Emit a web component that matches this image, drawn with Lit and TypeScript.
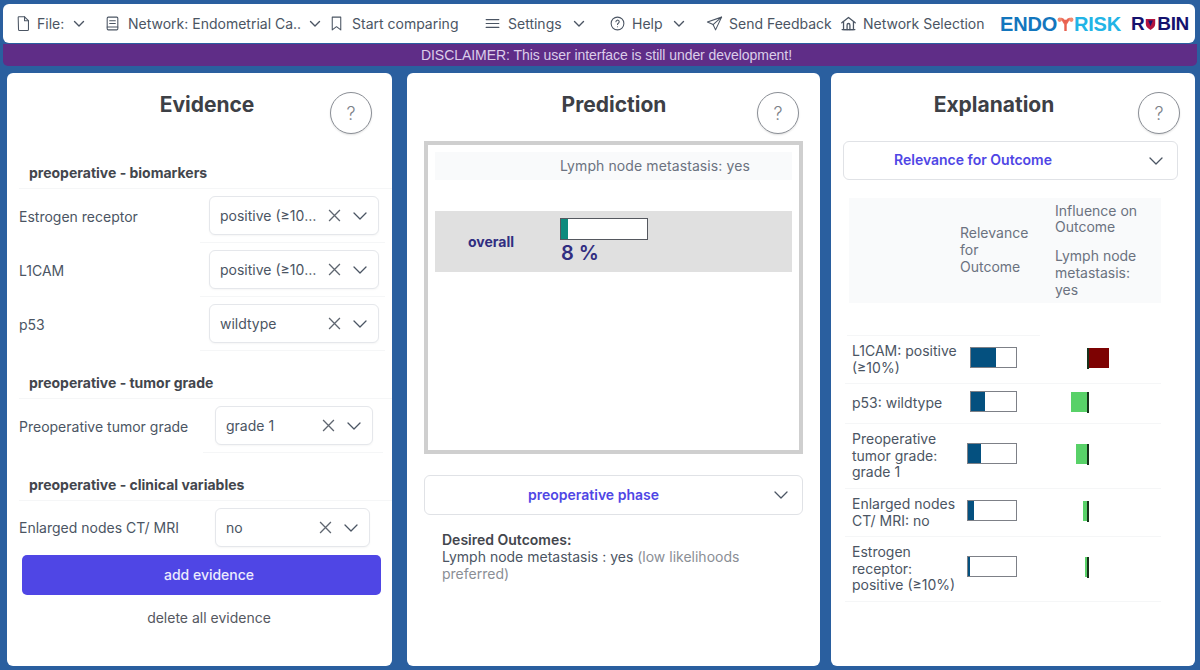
import { LitElement, css, html, svg } from 'lit';
import { customElement, property } from 'lit/decorators.js';

const chevron = html`<svg class="chev" viewBox="0 0 12 8" width="12" height="8"><path d="M1.500 1.500 6 6l4.500-4.500" fill="none" stroke="currentColor" stroke-width="1.400" stroke-linecap="round" stroke-linejoin="round"/></svg>`;

const bigChevron = html`<svg class="chev" viewBox="0 0 14 8" width="14" height="8"><path d="M1 1l6 6 6-6" fill="none" stroke="currentColor" stroke-width="1.300" stroke-linecap="round" stroke-linejoin="round"/></svg>`;

const icon = (body: unknown) =>
  html`<svg class="ico" viewBox="0 0 24 24" width="17" height="17" fill="none" stroke="currentColor" stroke-width="1.500" stroke-linecap="round" stroke-linejoin="round">${body}</svg>`;

const icons = {
  file: svg`<path d="M4.500 3.500a1 1 0 0 1 1-1h8l5.500 5.500v12.500a1.500 1.500 0 0 1-1.500 1.500h-11a1.500 1.500 0 0 1-1.500-1.500z"/><path d="M13.500 2.500v5.500h5.500"/>`,
  book: svg`<rect x="4.500" y="3" width="15" height="18" rx="1.500"/><path d="M8 8h8M8 12h8M4.500 17h15"/>`,
  bookmark: svg`<path d="M6 3h12v18l-6-4.500L6 21z"/>`,
  menu: svg`<path d="M3 6.500h18M3 12h18M3 17.500h18"/>`,
  help: svg`<circle cx="12" cy="12" r="9"/><path d="M9.800 9.500a2.300 2.300 0 1 1 3.400 2.100c-.8.500-1.200.9-1.200 1.900"/><path d="M12 16.500v.2"/>`,
  send: svg`<path d="M22 3 2 10l8 3.500L13.500 21z"/><path d="M22 3 10 13.500"/>`,
  home: svg`<path d="M2.500 11 12 3.500 21.500 11" stroke-width="1.800"/><path d="M5 9.500V20.500h14V9.500" stroke-width="1.800"/><path d="M3 20.500h18" stroke-width="1.800"/><path d="M10 20.500v-6.500a2 2 0 0 1 4 0v6.500" stroke-width="1.800"/>`,
};

@customElement('ev-select')
export class EvSelect extends LitElement {
  @property({ type: String }) value = '';

  static styles = css`
    :host {
      display: block;
    }
    .box {
      height: 39px;
      box-sizing: border-box;
      display: flex;
      align-items: center;
      border: 1px solid #e5e7eb;
      border-radius: 6px;
      background: #fff;
      padding: 0 11px 0 10px;
      color: #4b5563;
      font-size: 14px;
      box-shadow: 0 1px 2px rgba(0, 0, 0, 0.04);
    }
    .val {
      flex: 1;
      min-width: 0;
      white-space: nowrap;
      overflow: hidden;
      text-overflow: ellipsis;
    }
    .x {
      margin: 0 12px 0 8px;
      flex: none;
    }
    .chev {
      flex: none;
      color: #4b5563;
    }
  `;

  render() {
    return html`<div class="box">
      <span class="val">${this.value}</span>
      <svg class="x" viewBox="0 0 12 12" width="13" height="13"><path d="M1 1l10 10M11 1 1 11" stroke="#5f6670" stroke-width="1.200" fill="none"/></svg>
      ${bigChevron}
    </div>`;
  }
}

interface EvidenceRow {
  label: string;
  value: string;
  kind: 'a' | 'b' | 'c';
}

const sections: { title: string; rows: EvidenceRow[] }[] = [
  {
    title: 'preoperative - biomarkers',
    rows: [
      { label: 'Estrogen receptor', value: 'positive (≥10%)', kind: 'a' },
      { label: 'L1CAM', value: 'positive (≥10%)', kind: 'a' },
      { label: 'p53', value: 'wildtype', kind: 'a' },
    ],
  },
  {
    title: 'preoperative - tumor grade',
    rows: [{ label: 'Preoperative tumor grade', value: 'grade 1', kind: 'b' }],
  },
  {
    title: 'preoperative - clinical variables',
    rows: [{ label: 'Enlarged nodes CT/ MRI', value: 'no', kind: 'c' }],
  },
];

const explanation = [
  { label: 'L1CAM: positive (≥10%)', relW: 47, rel: 25, inf: 20, h: 48 },
  { label: 'p53: wildtype', relW: 47, rel: 14, inf: -16, h: 40 },
  { label: 'Preoperative tumor grade: grade 1', relW: 50, rel: 13, inf: -11, h: 65 },
  { label: 'Enlarged nodes CT/ MRI: no', relW: 50, rel: 6, inf: -4, h: 48 },
  { label: 'Estrogen receptor: positive (≥10%)', relW: 50, rel: 2, inf: -2, h: 65 },
];

@customElement('app-root')
export class AppRoot extends LitElement {
  static styles = css`
    :host {
      display: block;
      width: 1200px;
      height: 670px;
      overflow: hidden;
      background: #2a5f9f;
      font-family: Inter, 'Liberation Sans', sans-serif;
      color: #4b5563;
      font-size: 14px;
    }
    .nav {
      height: 39px;
      margin: 4px 5px 0 3px;
      background: #fff;
      border-radius: 6px;
      display: flex;
      align-items: center;
      padding-left: 12px;
      box-sizing: border-box;
    }
    .nav-item {
      display: flex;
      align-items: center;
      color: #4b5563;
      white-space: nowrap;
    }
    .nav-item .ico {
      flex: none;
      margin-right: 6px;
    }
    .nav-item .chev {
      margin-left: 9px;
      color: #4b5563;
    }
    .i-file { width: 89px; }
    .i-file .ico { margin-right: 5px; }
    .i-net { width: 224px; }
    .i-net .ico { margin-right: 7px; }
    .i-net .chev { margin-left: 8px; }
    .i-cmp { width: 156px; }
    .i-cmp .ico { margin-right: 7px; }
    .i-set { width: 125px; }
    .i-set .ico { margin-right: 7px; }
    .i-set .chev { margin-left: 11px; }
    .i-help { width: 97px; }
    .i-help .chev { margin-left: 10px; }
    .i-send { width: 134px; }
    .i-home { width: 160px; }
    .endo {
      display: flex;
      align-items: center;
      font: bold 20px/1 'Liberation Sans', sans-serif;
      letter-spacing: -0.2px;
      width: 131px;
    }
    .endo .a { color: #1376bd; }
    .endo .b { color: #22b4e6; }
    .endo svg { flex: none; }
    .robin {
      display: flex;
      align-items: center;
      font: bold 19px/1 'Liberation Sans', sans-serif;
      color: #15126e;
      letter-spacing: -0.4px;
    }
    .robin svg { margin: 0 1px; flex: none; }
    .disclaimer {
      height: 22px;
      margin: 1px 3px 0 3px;
      background: #5f2d87;
      border-radius: 0 0 5px 5px;
      color: #dccdea;
      font: 14px/22px 'Liberation Sans', sans-serif;
      letter-spacing: -0.05px;
      text-align: center;
      padding-left: 13px;
    }
    .panels {
      display: flex;
      align-items: flex-start;
      margin: 7px 0 0 7px;
    }
    .panel {
      position: relative;
      background: #fff;
      border-radius: 6px;
      box-sizing: border-box;
      height: 593px;
      flex: none;
    }
    .evidence { width: 385px; margin-right: 15px; }
    .prediction { width: 413px; margin-right: 11px; }
    .explain { width: 364px; }
    h2 {
      margin: 0;
      padding-top: 17px;
      font-size: 21px;
      line-height: 29px;
      font-weight: 700;
      color: #3d4046;
      text-align: center;
    }
    .help {
      position: absolute;
      top: 19px;
      width: 42px;
      height: 42px;
      box-sizing: border-box;
      border: 1px solid #8b8f96;
      border-radius: 50%;
      background: #fff;
      color: #7d8289;
      font-size: 18px;
      font-weight: 300;
      display: flex;
      align-items: center;
      justify-content: center;
      box-shadow: 0 1px 2px rgba(0, 0, 0, 0.12);
    }
    /* evidence */
    .evidence h2 { padding-left: 15px; }
    .evidence .help { left: 323px; }
    .prediction h2 { padding-left: 1px; }
    .prediction .help { left: 350px; }
    .sections { padding: 43px 0 0 12px; }
    .section + .section { margin-top: 21px; }
    .sec-title {
      height: 27px;
      box-sizing: border-box;
      border-bottom: 1px solid #f5f6f7;
      padding-left: 10px;
      font-size: 14px;
      line-height: 22px;
      font-weight: 700;
      color: #43464d;
    }
    .row {
      display: flex;
      align-items: center;
    }
    .row .label { flex: none; }
    .field {
      box-sizing: border-box;
      padding: 7px 0;
      border-bottom: 1px solid #f5f6f7;
    }
    .row.a .label { width: 181px; }
    .row.a .field { width: 185px; padding-left: 9px; padding-right: 6px; }
    .row.b .label { width: 184px; }
    .row.b .field { width: 180px; padding-left: 12px; padding-right: 10px; }
    .row.c .label { width: 196px; }
    .row.c .field { width: 155px; border-bottom: 0; padding-bottom: 7px; }
    .btn {
      margin: 1px 0 0 15px;
      width: 359px;
      height: 40px;
      box-sizing: border-box;
      padding: 0 0 2px 15px;
      border-radius: 5px;
      background: #4f46e5;
      color: #ecebfd;
      font-weight: 500;
      display: flex;
      align-items: center;
      justify-content: center;
    }
    .link {
      margin: 14px 0 0 15px;
      width: 359px;
      box-sizing: border-box;
      padding-left: 15px;
      line-height: 18px;
      text-align: center;
      color: #55585f;
    }
    /* prediction */
    .frame {
      margin: 22px 17px 0;
      height: 313px;
      box-sizing: border-box;
      border: 4px solid #cfcfcf;
      padding: 7px;
    }
    .pred-head {
      height: 28px;
      background: #f9fafb;
      padding-left: 125px;
      line-height: 28px;
      letter-spacing: 0.1px;
      color: #6b7280;
    }
    .pred-row {
      margin-top: 31px;
      height: 61px;
      background: #e0e0e0;
      display: grid;
      grid-template-columns: 125px 1fr;
      color: #312e81;
    }
    .pred-row .name {
      width: 112px;
      text-align: center;
      font-weight: 700;
      font-size: 14px;
      line-height: 61px;
    }
    .pbar {
      margin-top: 7px;
      width: 88px;
      height: 22px;
      box-sizing: border-box;
      border: 1px solid #55585f;
      background: #fff;
    }
    .pbar div {
      height: 100%;
      background: #0e8a7d;
    }
    .pct {
      font-size: 20px;
      line-height: 26px;
      font-weight: 600;
      padding-left: 1px;
    }
    .dd {
      box-sizing: border-box;
      border: 1px solid #e0e2e6;
      border-radius: 6px;
      background: #fff;
      display: flex;
      align-items: center;
      color: #4f46e5;
      font-weight: 600;
      font-size: 14px;
    }
    .dd span {
      flex: 1;
      text-align: center;
      padding-bottom: 2px;
    }
    .dd .chev {
      color: #4b5563;
      flex: none;
    }
    .phase {
      margin: 21px 17px 0;
      height: 40px;
      padding-right: 14px;
    }
    .phase span { padding-right: 12px; }
    .desired {
      margin: 16px 0 0 35px;
      width: 330px;
      line-height: 17px;
    }
    .desired b {
      font-weight: 600;
      color: #43464d;
      display: block;
    }
    .desired .main { color: #4b5563; }
    .desired .note { color: #8a8e95; }
    /* explanation */
    .explain h2 { padding-right: 38px; }
    .explain .help { left: 307px; }
    .rel-select {
      margin: 22px 17px 0 12px;
      height: 39px;
      padding-right: 14px;
    }
    .rel-select span { padding-right: 47px; }
    .exp-head {
      margin: 18px 34px 0 18px;
      height: 105px;
      background: #f9fafb;
      display: grid;
      grid-template-columns: 95px 100px;
      padding-left: 111px;
      align-items: center;
      line-height: 16.700px;
      color: #6b7280;
    }
    .exp-head .rel-label { width: 76px; }
    .exp-head p { margin: 0; }
    .exp-head p + p { margin-top: 12px; }
    .rule {
      margin: 32px 0 0 16px;
      width: 193px;
      border-top: 1px solid #f5f6f7;
    }
    .exp-row {
      margin: 0 34px 0 14px;
      display: grid;
      grid-template-columns: 115px 50px 1fr;
      align-items: center;
      border-bottom: 1px solid #f5f6f7;
      box-sizing: border-box;
      padding-left: 7px;
      line-height: 16.700px;
    }
    .rel {
      justify-self: end;
      height: 21px;
      box-sizing: border-box;
      border: 1px solid #7d8087;
      background: #fff;
      margin-top: -5px;
    }
    .rel div {
      height: 100%;
      background: #04507f;
    }
    .inf {
      display: grid;
      grid-template-columns: 70px 2px 1fr;
      height: 21px;
      margin-top: -3px;
    }
    .inf .neg {
      justify-self: end;
      background: #58d168;
      height: 20px;
    }
    .inf .zero {
      background: #17321b;
    }
    .inf .pos {
      background: #7d0202;
      height: 20px;
    }
  `;

  renderEvidence() {
    return html`<section class="panel evidence">
      <h2>Evidence</h2>
      <div class="help">?</div>
      <div class="sections">
        ${sections.map(
          (s) => html`<div class="section">
            <div class="sec-title">${s.title}</div>
            ${s.rows.map(
              (r) => html`<div class="row ${r.kind}">
                <div class="label">${r.label}</div>
                <div class="field"><ev-select .value=${r.value}></ev-select></div>
              </div>`,
            )}
          </div>`,
        )}
      </div>
      <div class="btn">add evidence</div>
      <div class="link">delete all evidence</div>
    </section>`;
  }

  renderPrediction() {
    return html`<section class="panel prediction">
      <h2>Prediction</h2>
      <div class="help">?</div>
      <div class="frame">
        <div class="pred-head">Lymph node metastasis: yes</div>
        <div class="pred-row">
          <div class="name">overall</div>
          <div>
            <div class="pbar"><div style="width:8%"></div></div>
            <div class="pct">8 %</div>
          </div>
        </div>
      </div>
      <div class="dd phase"><span>preoperative phase</span>${bigChevron}</div>
      <div class="desired">
        <b>Desired Outcomes:</b>
        <span class="main">Lymph node metastasis : yes</span>
        <span class="note">(low likelihoods</span><br />
        <span class="note">preferred)</span>
      </div>
    </section>`;
  }

  renderExplanation() {
    return html`<section class="panel explain">
      <h2>Explanation</h2>
      <div class="help">?</div>
      <div class="dd rel-select"><span>Relevance for Outcome</span>${bigChevron}</div>
      <div class="exp-head">
        <div class="rel-label">Relevance for Outcome</div>
        <div>
          <p>Influence on Outcome</p>
          <p>Lymph node metastasis: yes</p>
        </div>
      </div>
      <div class="rule"></div>
      ${explanation.map(
        (r) => html`<div class="exp-row" style="height:${r.h}px">
          <div>${r.label}</div>
          <div class="rel" style="width:${r.relW}px"><div style="width:${r.rel}px"></div></div>
          <div class="inf">
            <div class="neg" style="width:${r.inf < 0 ? -r.inf : 0}px"></div>
            <div class="zero"></div>
            <div class="pos" style="width:${r.inf > 0 ? r.inf : 0}px"></div>
          </div>
        </div>`,
      )}
    </section>`;
  }

  render() {
    return html`
      <nav class="nav">
        <div class="nav-item i-file">${icon(icons.file)}<span>File:</span>${chevron}</div>
        <div class="nav-item i-net">${icon(icons.book)}<span>Network: Endometrial Ca..</span>${chevron}</div>
        <div class="nav-item i-cmp">${icon(icons.bookmark)}<span>Start comparing</span></div>
        <div class="nav-item i-set">${icon(icons.menu)}<span>Settings</span>${chevron}</div>
        <div class="nav-item i-help">${icon(icons.help)}<span>Help</span>${chevron}</div>
        <div class="nav-item i-send">${icon(icons.send)}<span>Send Feedback</span></div>
        <div class="nav-item i-home">${icon(icons.home)}<span>Network Selection</span></div>
        <div class="endo">
          <span class="a">ENDO</span>
          <svg viewBox="0 0 18 16" width="17" height="15">
            <path d="M9 8v7.500" stroke="#e8604f" stroke-width="2.600" stroke-linecap="round"/>
            <path d="M4 3.500C7 2.500 7 7 9 8c2-1 2-5.500 5-4.500" stroke="#ec6a58" stroke-width="3" fill="none"/>
            <path d="M6 4c1 2 1.500 3 3 4 1.500-1 2-2 3-4z" fill="#e8604f"/>
            <circle cx="2.800" cy="4" r="2.300" fill="#f08a70"/>
            <circle cx="15.200" cy="4" r="2.300" fill="#f08a70"/>
          </svg>
          <span class="b">RISK</span>
        </div>
        <div class="robin">
          <span>R</span>
          <svg viewBox="0 0 14 16" width="11" height="14">
            <path d="M1 1.500h12V8c0 3.500-3 6-6 7.500C4 14 1 11.500 1 8z" fill="#b3133f"/>
            <path d="M4 3.500h6L7 11z" fill="#15126e"/>
          </svg>
          <span>BIN</span>
        </div>
      </nav>
      <div class="disclaimer">DISCLAIMER: This user interface is still under development!</div>
      <div class="panels">
        ${this.renderEvidence()} ${this.renderPrediction()} ${this.renderExplanation()}
      </div>
    `;
  }
}
